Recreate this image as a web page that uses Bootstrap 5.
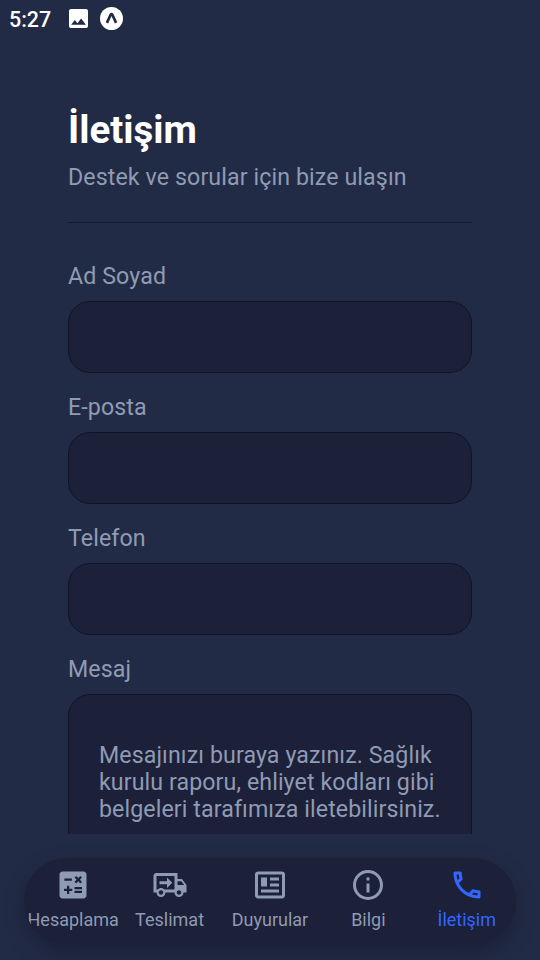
<!DOCTYPE html>
<html lang="tr" data-bs-theme="dark">
<head>
<meta charset="utf-8">
<meta name="viewport" content="width=device-width, initial-scale=1">
<title>İletişim</title>
<link href="https://cdn.jsdelivr.net/npm/bootstrap@5.3.0/dist/css/bootstrap.min.css" rel="stylesheet">
<style>
body { background: #222b45; color: #8f9bb3; font-family: Roboto, sans-serif; font-size: 23.2px; line-height: 27px; letter-spacing: .1px; }
.status { height: 37px; padding: 0 9px; color: #fff; font-size: 21.4px; font-weight: 500; letter-spacing: 0; }
.status .clock { width: 60px; padding-top: 1px; }
.page-scroll { height: 797px; padding: 69px 68px 0; }
.page-title { color: #fff; font-size: 38.5px; line-height: 48px; font-weight: 700; letter-spacing: 0; }
.subtitle { margin-top: 10px; }
.divider { height: 1px; background: #151a30; margin: 31px 0 40px; }
.field { margin-bottom: 21px; }
.field .form-label { display: block; margin: 0 0 11px; font-size: 23.2px; line-height: 27px; }
.field .form-control { height: 72px; background: #1c2039; border: 1.5px solid #101427; border-radius: 22px; color: #8f9bb3; box-shadow: none; }
.field textarea.form-control { height: 210px; padding: 47px 26px 30px 30px; font-size: 23.2px; line-height: 27px; letter-spacing: .09px; resize: none; overflow: hidden; }
.field .form-control::placeholder { color: #8f9bb3; opacity: 1; }
.tab-bar { height: 86px; margin: 23.5px 24px 0; background: #1c2039; border-radius: 45px; font-size: 18px; line-height: 22px; letter-spacing: 0; box-shadow: 0 8px 18px rgba(26,31,56,.9); }
.tab-bar a { flex: 0 0 20%; min-width: 0; padding-top: 9px; color: #8f9bb3; }
.tab-bar a.active { color: #36f; }
.tab-bar svg { width: 36px; height: 36px; margin-bottom: 6.5px; }
</style>
<script src="https://cdn.jsdelivr.net/npm/bootstrap@5.3.0/dist/js/bootstrap.bundle.min.js"></script>
</head>
<body class="vh-100 overflow-hidden">
<header class="status d-flex align-items-center">
  <span class="clock">5:27</span>
  <svg width="19" height="19" viewBox="3 3 18 18" fill="currentColor"><path d="M21 19V5c0-1.1-.9-2-2-2H5c-1.1 0-2 .9-2 2v14c0 1.1.9 2 2 2h14c1.1 0 2-.9 2-2zM8.5 13.5l2.5 3.01L14.5 12l4.5 6H5l3.5-4.5z"/></svg>
  <svg class="ms-2 ps-1" width="27" height="23" viewBox="0 0 24 24"><circle cx="12" cy="12" r="12" fill="#fff"/><path d="M7.2 16.6 11 8.2Q12 6.6 13 8.2l3.8 8.4" fill="none" stroke="#222b45" stroke-width="2.8"/></svg>
</header>
<main class="page-scroll overflow-hidden">
  <h1 class="page-title mb-0">İletişim</h1>
  <p class="subtitle mb-0">Destek ve sorular için bize ulaşın</p>
  <div class="divider"></div>
  <form>
    <div class="field"><label class="form-label" for="name">Ad Soyad</label><input id="name" class="form-control" type="text"></div>
    <div class="field"><label class="form-label" for="mail">E-posta</label><input id="mail" class="form-control" type="email"></div>
    <div class="field"><label class="form-label" for="phone">Telefon</label><input id="phone" class="form-control" type="tel"></div>
    <div class="field"><label class="form-label" for="message">Mesaj</label><textarea id="message" class="form-control" placeholder="Mesajınızı buraya yazınız. Sağlık kurulu raporu, ehliyet kodları gibi belgeleri tarafımıza iletebilirsiniz."></textarea></div>
  </form>
</main>
<nav class="tab-bar d-flex overflow-hidden">
  <a href="#" class="d-flex flex-column align-items-center text-decoration-none"><svg viewBox="0 0 24 24" fill="currentColor"><path d="M19 3H5c-1.1 0-2 .9-2 2v14c0 1.1.9 2 2 2h14c1.1 0 2-.9 2-2V5c0-1.1-.9-2-2-2zm-5.97 4.06L14.09 6l1.41 1.41L16.91 6l1.06 1.06-1.41 1.41 1.41 1.41-1.06 1.06-1.41-1.4-1.41 1.41-1.06-1.06 1.41-1.41-1.41-1.42zM6.25 7.72h5v1.5h-5v-1.5zM11.5 16h-2v2H8v-2H6v-1.5h2v-2h1.5v2h2V16zm6.5 1.25h-5v-1.5h5v1.5zm0-2.5h-5v-1.5h5v1.5z"/></svg><span>Hesaplama</span></a>
  <a href="#" class="d-flex flex-column align-items-center text-decoration-none pe-1"><svg viewBox="0 0 24 24" fill="currentColor"><path d="M18 18.5C18.83 18.5 19.5 17.83 19.5 17C19.5 16.17 18.83 15.5 18 15.5C17.17 15.5 16.5 16.17 16.5 17C16.5 17.83 17.17 18.5 18 18.5M19.5 9.5H17V12H21.46L19.5 9.5M6 18.5C6.83 18.5 7.5 17.83 7.5 17C7.5 16.17 6.83 15.5 6 15.5C5.17 15.5 4.5 16.17 4.5 17C4.5 17.83 5.17 18.5 6 18.5M20 8L23 12V17H21C21 18.66 19.66 20 18 20C16.34 20 15 18.66 15 17H9C9 18.66 7.66 20 6 20C4.34 20 3 18.66 3 17H1V6C1 4.89 1.89 4 3 4H17V8H20M3 6V15H3.76C4.31 14.39 5.11 14 6 14C6.89 14 7.69 14.39 8.24 15H15V6H3M10 7L13.5 10.5L10 14V11.5H5V9.5H10V7Z"/></svg><span>Teslimat</span></a>
  <a href="#" class="d-flex flex-column align-items-center text-decoration-none"><svg viewBox="0 0 24 24" fill="currentColor"><path d="M20 5L20 19L4 19L4 5H20M20 3H4C2.89 3 2 3.89 2 5V19C2 20.11 2.89 21 4 21H20C21.11 21 22 20.11 22 19V5C22 3.89 21.11 3 20 3M18 15H6V17H18V15M10 7H6V13H10V7M12 9H18V7H12V9M18 11H12V13H18V11Z"/></svg><span>Duyurular</span></a>
  <a href="#" class="d-flex flex-column align-items-center text-decoration-none"><svg viewBox="0 0 24 24" fill="currentColor"><path d="M11 9h2V7h-2m1 13c-4.41 0-8-3.59-8-8s3.59-8 8-8 8 3.59 8 8-3.59 8-8 8m0-18A10 10 0 0 0 2 12a10 10 0 0 0 10 10 10 10 0 0 0 10-10A10 10 0 0 0 12 2m-1 15h2v-6h-2v6z"/></svg><span>Bilgi</span></a>
  <a href="#" class="active d-flex flex-column align-items-center text-decoration-none"><svg viewBox="0 0 24 24" fill="currentColor"><path d="M20 15.5C18.8 15.5 17.5 15.3 16.4 14.9H16.1C15.8 14.9 15.6 15 15.4 15.2L13.2 17.4C10.4 15.9 8 13.6 6.6 10.8L8.8 8.6C9.1 8.3 9.2 7.9 9 7.6C8.7 6.5 8.5 5.2 8.5 4C8.5 3.5 8 3 7.5 3H4C3.5 3 3 3.5 3 4C3 13.4 10.6 21 20 21C20.5 21 21 20.5 21 20V16.5C21 16 20.5 15.5 20 15.5M5 5H6.5C6.6 5.9 6.8 6.8 7 7.6L5.8 8.8C5.4 7.6 5.1 6.3 5 5M19 19C17.7 18.9 16.4 18.6 15.2 18.2L16.4 17C17.2 17.2 18.1 17.4 19 17.4V19Z"/></svg><span>İletişim</span></a>
</nav>
</body>
</html>
